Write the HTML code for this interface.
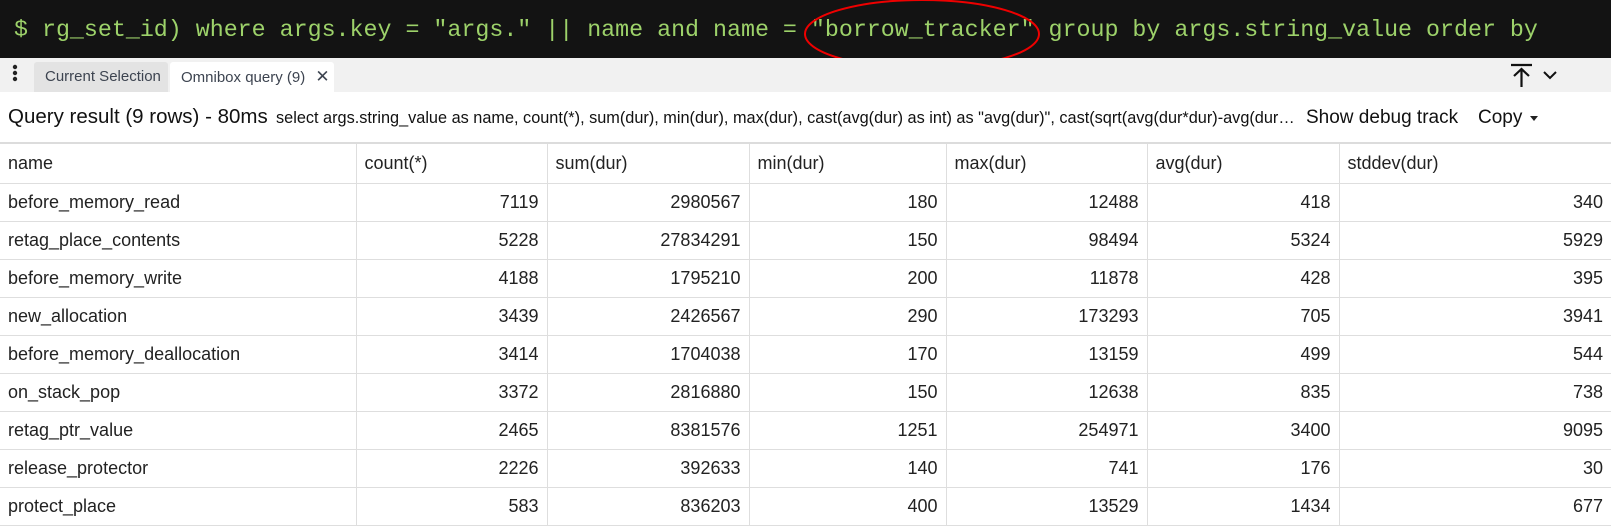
<!DOCTYPE html>
<html><head><style>
*{box-sizing:border-box;margin:0;padding:0}
body{width:1611px;height:527px;overflow:hidden;background:#fff;font-family:"Liberation Sans Narrow","Liberation Sans",sans-serif;position:relative}
.term{position:absolute;left:0;top:0;width:1611px;height:58px;background:#131313;color:#9dd26a;font-family:"Liberation Mono",monospace;font-size:23.3px;line-height:60px;padding-left:14px;white-space:pre}
.tabs{position:absolute;left:0;top:58px;width:1611px;height:34px;background:#f1f1f1}
.tab{position:absolute;top:4px;height:30px;font-size:15px;color:#3d4450;line-height:30px;padding-left:11px;border-radius:3px 3px 0 0}
.hdr{position:absolute;left:0;top:92px;width:1611px;height:52px;border-bottom:2px solid #dcdcdc}
table{position:absolute;left:0;top:144px;border-collapse:collapse;font-size:18px;color:#222}
td{height:38px;border-right:1px solid #dedede;border-bottom:1px solid #dedede;padding:0 8px;text-align:right}
td:first-child{text-align:left}
tr.h td{text-align:left;height:39px}
td:last-child{border-right:none}
</style></head><body>
<div class="term">$ rg_set_id) where args.key = "args." || name and name = "borrow_tracker" group by args.string_value order by</div>
<svg style="position:absolute;left:0;top:0" width="1611" height="90"><ellipse cx="922" cy="34" rx="117" ry="34" fill="none" stroke="#e00" stroke-width="2"/></svg>
<div class="tabs">
<svg style="position:absolute;left:10px;top:6px" width="10" height="20"><circle cx="5" cy="3" r="2.2" fill="#222"/><circle cx="5" cy="9" r="2.2" fill="#222"/><circle cx="5" cy="15" r="2.2" fill="#222"/></svg>
<div class="tab" style="left:34px;width:134px;background:#e3e3e3">Current Selection</div>
<div class="tab" style="left:170px;width:164px;background:#fff">Omnibox query (9) <span style="margin-left:6px;font-size:17px">✕</span></div>
<svg style="position:absolute;left:1510px;top:4px" width="50" height="26"><path d="M1 3H22M11.5 25V7M4 14L11.5 7L19 14" stroke="#111" stroke-width="2.2" fill="none"/><path d="M34 10L40 16L46 10" stroke="#111" stroke-width="2" fill="none"/></svg>
</div>
<div class="hdr">
<span style="position:absolute;left:8px;top:13px;font-size:20.5px;color:#111">Query result (9 rows) - 80ms</span>
<span style="position:absolute;left:276px;top:17px;font-size:16.3px;color:#111">select args.string_value as name, count(*), sum(dur), min(dur), max(dur), cast(avg(dur) as int) as "avg(dur)", cast(sqrt(avg(dur*dur)-avg(dur…</span>
<span style="position:absolute;left:1306px;top:15px;font-size:19px;color:#111">Show debug track</span>
<span style="position:absolute;left:1478px;top:15px;font-size:19px;color:#111">Copy</span>
<span style="position:absolute;left:1530px;top:24px;width:0;height:0;border-left:4px solid transparent;border-right:4px solid transparent;border-top:5px solid #222"></span>
</div>
<table>
<colgroup><col style="width:356px"><col style="width:191px"><col style="width:202px"><col style="width:197px"><col style="width:201px"><col style="width:192px"><col style="width:272px"></colgroup>
<tr class="h"><td>name</td><td>count(*)</td><td>sum(dur)</td><td>min(dur)</td><td>max(dur)</td><td>avg(dur)</td><td>stddev(dur)</td></tr>
<tr><td>before_memory_read</td><td>7119</td><td>2980567</td><td>180</td><td>12488</td><td>418</td><td>340</td></tr>
<tr><td>retag_place_contents</td><td>5228</td><td>27834291</td><td>150</td><td>98494</td><td>5324</td><td>5929</td></tr>
<tr><td>before_memory_write</td><td>4188</td><td>1795210</td><td>200</td><td>11878</td><td>428</td><td>395</td></tr>
<tr><td>new_allocation</td><td>3439</td><td>2426567</td><td>290</td><td>173293</td><td>705</td><td>3941</td></tr>
<tr><td>before_memory_deallocation</td><td>3414</td><td>1704038</td><td>170</td><td>13159</td><td>499</td><td>544</td></tr>
<tr><td>on_stack_pop</td><td>3372</td><td>2816880</td><td>150</td><td>12638</td><td>835</td><td>738</td></tr>
<tr><td>retag_ptr_value</td><td>2465</td><td>8381576</td><td>1251</td><td>254971</td><td>3400</td><td>9095</td></tr>
<tr><td>release_protector</td><td>2226</td><td>392633</td><td>140</td><td>741</td><td>176</td><td>30</td></tr>
<tr><td>protect_place</td><td>583</td><td>836203</td><td>400</td><td>13529</td><td>1434</td><td>677</td></tr>
</table>
</body></html>
